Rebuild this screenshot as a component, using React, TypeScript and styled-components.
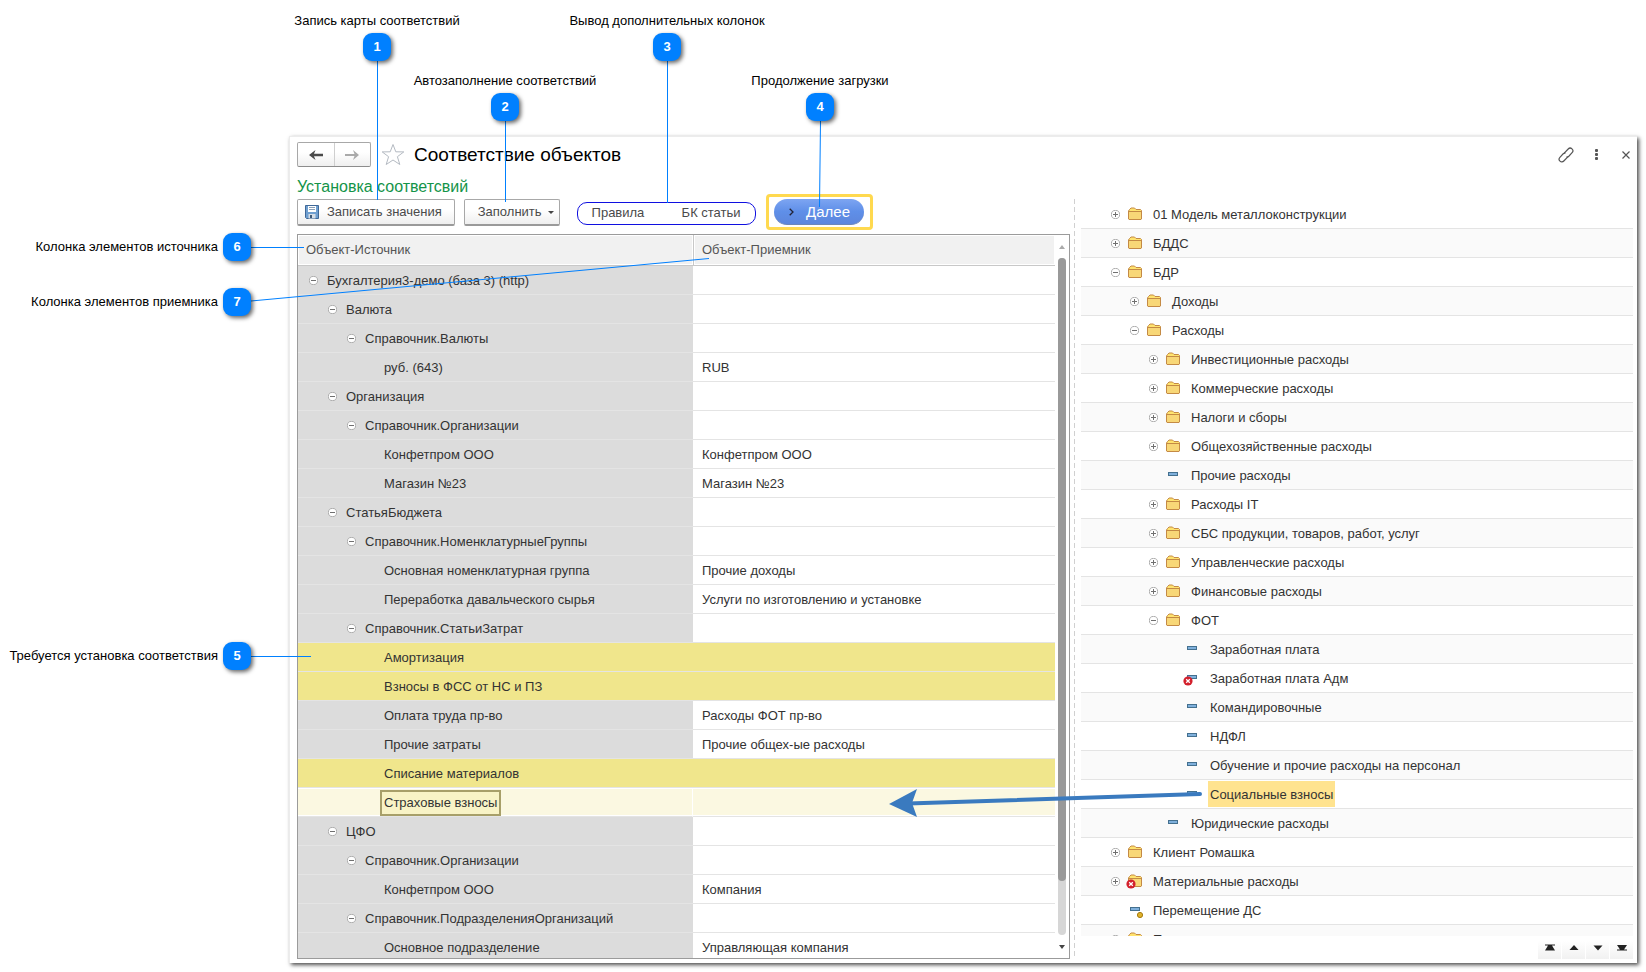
import React from "react";
import styled, { createGlobalStyle, css } from "styled-components";

const GlobalStyle = createGlobalStyle`
  *, *::before, *::after { box-sizing: border-box; }
  body {
    margin: 0;
    background: #fff;
    color: #333;
    font-family: "Liberation Sans", Arial, sans-serif;
    font-size: 13px;
    line-height: 16px;
  }
  button { font: inherit; color: inherit; cursor: pointer; }
`;

/* ---------- page and window ---------- */

const Page = styled.main`
  position: relative;
  display: flex;
  height: 100vh;
  min-height: 600px;
  min-width: 1300px;
  padding: 136px 9px 9px 289px;
  overflow: hidden;
`;

const AppWindow = styled.section`
  display: flex;
  flex: 1;
  flex-direction: column;
  min-width: 0;
  padding: 5px 4px 4px 7px;
  background: #fff;
  border-top: 1px solid #ececec;
  border-left: 1px solid #ececec;
  box-shadow: 2px 2px 4px rgba(0, 0, 0, 0.7);
`;

const TitleBar = styled.header`
  display: flex;
  align-items: center;
  height: 25px;
`;

const History = styled.div`
  display: flex;
  width: 74px;
  height: 25px;
  border: 1px solid #a8a8a8;
  border-bottom-color: #8c8c8c;
  border-radius: 2px;
  background: linear-gradient(#fff 40%, #efefef);
`;

const HistoryButton = styled.button`
  display: flex;
  flex: 1;
  align-items: center;
  justify-content: center;
  padding: 0;
  border: 0;
  background: none;
  color: #4a4a4a;

  & + & {
    border-left: 1px solid #cfcfcf;
    color: #aaa;
  }
`;

const IconButton = styled.button`
  display: flex;
  align-items: center;
  justify-content: center;
  width: 24px;
  height: 24px;
  padding: 0;
  border: 0;
  background: none;
  color: #555;
`;

const StarButton = styled(IconButton)`
  margin: 0 9px 0 10px;
`;

const Title = styled.h1`
  flex: 1;
  margin: 0;
  padding-top: 1px;
  color: #000;
  font-size: 19px;
  font-weight: 400;
  line-height: 24px;
`;

const WindowActions = styled.div`
  display: flex;
  gap: 6px;
  margin-right: -5px;
`;

const Subtitle = styled.h2`
  margin: 13px 0 0;
  color: #149449;
  font-size: 16px;
  font-weight: 400;
  line-height: 14px;
`;

const Panes = styled.div`
  display: flex;
  flex: 1;
  min-height: 0;
`;

const LeftPane = styled.div`
  display: flex;
  flex: 0 0 773px;
  flex-direction: column;
  gap: 4px;
`;

/* ---------- toolbar ---------- */

const Toolbar = styled.div`
  display: flex;
  align-items: center;
  height: 36px;
`;

const ToolButton = styled.button`
  display: flex;
  align-items: center;
  gap: 8px;
  height: 27px;
  margin-right: 9px;
  padding: 1px 12px 0 7px;
  border: 1px solid #a8a8a8;
  border-bottom: 2px solid #9a9a9a;
  border-radius: 2px;
  background: linear-gradient(#fff 40%, #efefef);
  color: #4a4a4a;
`;

const FillButton = styled(ToolButton)`
  gap: 6px;
  padding: 1px 5px 0 13px;
`;

const ColumnSwitch = styled.div`
  display: flex;
  justify-content: space-between;
  width: 179px;
  height: 23px;
  margin: 2px 10px 0 8px;
  padding: 0 14px;
  border: 1px solid #1010e0;
  border-radius: 10px;
`;

const SwitchButton = styled.button`
  padding: 0;
  border: 0;
  background: none;
  color: #4a4a4a;
`;

const NextFrame = styled.div`
  display: flex;
  align-items: center;
  justify-content: center;
  width: 107px;
  height: 36px;
  border: 3px solid #ffd94f;
  border-radius: 4px;
`;

const NextButton = styled.button`
  display: flex;
  align-items: center;
  gap: 12px;
  width: 90px;
  height: 26px;
  padding: 0 0 0 15px;
  border: 0;
  border-bottom: 1px solid #6d86b8;
  border-radius: 13px;
  background: linear-gradient(#7da5f2, #5f8fe8 50%, #5d86dc);
  color: #fff;
  font-size: 15px;
`;

/* ---------- mapping table ---------- */

const TableFrame = styled.div`
  display: flex;
  flex: 1;
  min-height: 0;
  border: 1px solid #9b9b9b;
`;

const TableViewport = styled.div`
  flex: 1;
  overflow: hidden;
`;

const Table = styled.table`
  width: 100%;
  border-collapse: separate;
  border-spacing: 0;
  table-layout: fixed;
`;

const SourceCol = styled.col`
  width: 395px;
`;

const HeadCell = styled.th`
  height: 31px;
  padding: 0 8px;
  border-bottom: 1px solid #c8c8c8;
  background: #f1f1f1;
  box-shadow: inset 0 0 0 1px #fff;
  color: #555;
  font-weight: 400;
  text-align: left;

  & + & { border-left: 1px solid #c8c8c8; }
`;

type Tone = "plain" | "missing" | "selected";

const Cell = styled.td`
  height: 29px;
  padding: 1px 9px 0;
  border-bottom: 1px solid #e4e4e4;
`;

const Row = styled.tr<{ $tone: Tone }>`
  ${Cell}:first-child { background: #dcdcdc; }

  ${(p) =>
    p.$tone === "missing" &&
    css`
      ${Cell}, ${Cell}:first-child { background: #f0e68c; }
    `}

  ${(p) =>
    p.$tone === "selected" &&
    css`
      ${Cell}, ${Cell}:first-child {
        background: #fbf8e1;
        box-shadow: inset 0 1px #fff, inset 0 -1px #fff;
      }
      ${Cell}:first-child { border-right: 1px solid #fff; }
    `}
`;

const SourceItem = styled.div<{ $level: number }>`
  display: flex;
  align-items: center;
  gap: 9px;
  padding-left: ${(p) => 2 + p.$level * 19}px;
`;

const LeafName = styled.span<{ $selected: boolean }>`
  margin-left: 18px;

  ${(p) =>
    p.$selected &&
    css`
      height: 26px;
      margin: 0 0 0 14px;
      padding: 3px 2px;
      border: 2px solid #a79f69;
      background: #f8f3c6;
    `}
`;

const ToggleButton = styled.button`
  display: flex;
  flex: none;
  width: 9px;
  height: 9px;
  padding: 0;
  border: 0;
  background: none;
`;

const Scrollbar = styled.div`
  display: flex;
  flex: 0 0 14px;
  flex-direction: column;
  align-items: center;
`;

const ScrollArrow = styled.button`
  display: flex;
  align-items: center;
  justify-content: center;
  width: 14px;
  height: 23px;
  padding: 0;
  border: 0;
  background: none;
`;

const ScrollTrack = styled.div`
  flex: 1;
  width: 8px;
  border-radius: 4px;
  background: #d6d6d6;
`;

const ScrollThumb = styled.div`
  height: 92%;
  border-radius: 4px;
  background: #999;
`;

/* ---------- article tree ---------- */

const Splitter = styled.div`
  flex: none;
  width: 1px;
  margin: 5px 6px 0 4px;
  background: repeating-linear-gradient(#d0d0d0 0 5px, transparent 5px 8px);
`;

const RightPane = styled.div`
  display: flex;
  flex: 1;
  flex-direction: column;
  min-width: 0;
  padding-top: 6px;
`;

const Tree = styled.ul`
  flex: 1;
  min-height: 0;
  margin: 0;
  padding: 0;
  overflow: hidden;
  list-style: none;
`;

const TreeRow = styled.li<{ $level: number }>`
  display: flex;
  align-items: center;
  height: 29px;
  padding-left: ${(p) => 30 + p.$level * 19}px;
  border-bottom: 1px solid #e4e4e4;

  &:nth-child(even) { background: #fafafa; }
`;

const ToggleSlot = styled.span`
  display: flex;
  width: 16px;
`;

const TreeName = styled.span<{ $marked: boolean }>`
  margin-left: 8px;
  padding: 6px 2px 4px;
  background: ${(p) => (p.$marked ? "#ffe38f" : "none")};
`;

const Pager = styled.div`
  display: flex;
  flex: none;
  gap: 1px;
  justify-content: flex-end;
  padding-top: 5px;
`;

const PagerButton = styled.button`
  display: flex;
  align-items: center;
  justify-content: center;
  width: 23px;
  height: 18px;
  padding: 0 0 6px;
  border: 0;
  background: linear-gradient(#fff, #f1f1f1);
`;

/* ---------- callouts ---------- */

const Overlay = styled.svg`
  position: absolute;
  top: 0;
  left: 0;
  width: 100%;
  height: 100%;
  pointer-events: none;
`;

const TopCallout = styled.div<{ $x: number; $y: number }>`
  position: absolute;
  top: ${(p) => p.$y}px;
  left: ${(p) => p.$x}px;
  display: flex;
  flex-direction: column;
  align-items: center;
  gap: 4px;
  width: 240px;
  color: #000;
`;

const SideCallout = styled.div<{ $y: number }>`
  position: absolute;
  top: ${(p) => p.$y}px;
  left: 0;
  display: flex;
  align-items: center;
  justify-content: flex-end;
  gap: 5px;
  width: 251px;
  color: #000;
`;

const Badge = styled.span`
  width: 28px;
  height: 28px;
  border-radius: 9px;
  background: #0080ff;
  box-shadow: 2px 2px 4px rgba(0, 0, 0, 0.6);
  color: #fff;
  font-weight: 700;
  line-height: 28px;
  text-align: center;
`;

/* ---------- icons ---------- */

const Toggle = ({ open }: { open: boolean }) => (
  <ToggleButton type="button" aria-expanded={open} aria-label={open ? "Свернуть" : "Развернуть"}>
    <svg width="9" height="9" viewBox="0 0 9 9" fill="none">
      <circle cx="4.5" cy="4.5" r="4.1" fill="#fff" stroke="#adadad" />
      <path d={open ? "M2 4.5h5" : "M2 4.5h5M4.5 2v5"} stroke="#707070" />
    </svg>
  </ToggleButton>
);

const Deleted = ({ x, y }: { x: number; y: number }) => (
  <g transform={`translate(${x} ${y})`}>
    <circle r="4.6" fill="#d3202c" />
    <path d="M-1.8-1.8l3.6 3.6M1.8-1.8l-3.6 3.6" stroke="#fff" strokeWidth="1.3" />
  </g>
);

type IconKind = "folder" | "item" | "folderDeleted" | "itemDeleted" | "itemCoin";

const TreeIcon = ({ kind }: { kind: IconKind }) => (
  <svg width="16" height="16" viewBox="0 0 16 16" overflow="visible" aria-hidden="true">
    {kind.startsWith("folder") ? (
      <>
        <path d="M1.5 13V5l1-1.500 1.500-1.500h3.500l1.500 1.500h4.500l1 1V13l-.5.5h-12z" fill="#ffe36e" stroke="#c48a45" />
        <path d="M2 6h12v7H2z" fill="#f8d777" />
        <path d="M2 5.500h12.500" stroke="#c48a45" />
      </>
    ) : (
      <rect x="3.500" y="5.500" width="9" height="3" fill="#7fb0dc" stroke="#44708f" />
    )}
    {kind === "folderDeleted" && <Deleted x={4} y={11} />}
    {kind === "itemDeleted" && <Deleted x={4} y={11} />}
    {kind === "itemCoin" && <circle cx="13" cy="13" r="2.600" fill="#e0b22a" stroke="#a67c10" />}
  </svg>
);

const Floppy = () => (
  <svg width="14" height="14" viewBox="0 0 14 14" aria-hidden="true">
    <path d="M.5.5h13v13h-12l-1-1z" fill="#6f9fd0" stroke="#3f6898" />
    <path d="M3 1h8v6H3z" fill="#fff" />
    <path d="M4 2.500h6M4 4.500h6" stroke="#8aa0b8" />
    <path d="M3.500 9h7v4.500h-7z" fill="#d5dde6" />
    <path d="M5 10h2v3H5z" fill="#3f5a78" />
  </svg>
);

const PAGER: { label: string; d: string }[] = [
  { label: "В начало", d: "M0 1.500V.5h10v1H7l3 5H0l3-5z" },
  { label: "Вверх", d: "M5 1l4.500 5h-9z" },
  { label: "Вниз", d: "M5 6.500L9.500 1.500h-9z" },
  { label: "В конец", d: "M10 5.500v1H0v-1h3l-3-4.500h10l-3 4.500z" },
];

/* ---------- data ---------- */

interface MappingRow {
  level: number;
  name: string;
  target?: string;
  tone?: Tone;
}

const MAPPING: MappingRow[] = [
  { level: 0, name: "Бухгалтерия3-демо (база 3) (http)" },
  { level: 1, name: "Валюта" },
  { level: 2, name: "Справочник.Валюты" },
  { level: 3, name: "руб. (643)", target: "RUB" },
  { level: 1, name: "Организация" },
  { level: 2, name: "Справочник.Организации" },
  { level: 3, name: "Конфетпром ООО", target: "Конфетпром ООО" },
  { level: 3, name: "Магазин №23", target: "Магазин №23" },
  { level: 1, name: "СтатьяБюджета" },
  { level: 2, name: "Справочник.НоменклатурныеГруппы" },
  { level: 3, name: "Основная номенклатурная группа", target: "Прочие доходы" },
  { level: 3, name: "Переработка давальческого сырья", target: "Услуги по изготовлению и установке" },
  { level: 2, name: "Справочник.СтатьиЗатрат" },
  { level: 3, name: "Амортизация", tone: "missing" },
  { level: 3, name: "Взносы в ФСС от НС и ПЗ", tone: "missing" },
  { level: 3, name: "Оплата труда пр-во", target: "Расходы ФОТ пр-во" },
  { level: 3, name: "Прочие затраты", target: "Прочие общех-ые расходы" },
  { level: 3, name: "Списание материалов", tone: "missing" },
  { level: 3, name: "Страховые взносы", tone: "selected" },
  { level: 1, name: "ЦФО" },
  { level: 2, name: "Справочник.Организации" },
  { level: 3, name: "Конфетпром ООО", target: "Компания" },
  { level: 2, name: "Справочник.ПодразделенияОрганизаций" },
  { level: 3, name: "Основное подразделение", target: "Управляющая компания" },
];

interface Article {
  level: number;
  name: string;
  icon: IconKind;
  open?: boolean;
  marked?: boolean;
}

const ARTICLES: Article[] = [
  { level: 0, name: "01 Модель металлоконструкции", icon: "folder" },
  { level: 0, name: "БДДС", icon: "folder" },
  { level: 0, name: "БДР", icon: "folder", open: true },
  { level: 1, name: "Доходы", icon: "folder" },
  { level: 1, name: "Расходы", icon: "folder", open: true },
  { level: 2, name: "Инвестиционные расходы", icon: "folder" },
  { level: 2, name: "Коммерческие расходы", icon: "folder" },
  { level: 2, name: "Налоги и сборы", icon: "folder" },
  { level: 2, name: "Общехозяйственные расходы", icon: "folder" },
  { level: 2, name: "Прочие расходы", icon: "item" },
  { level: 2, name: "Расходы IT", icon: "folder" },
  { level: 2, name: "СБС продукции, товаров, работ, услуг", icon: "folder" },
  { level: 2, name: "Управленческие расходы", icon: "folder" },
  { level: 2, name: "Финансовые расходы", icon: "folder" },
  { level: 2, name: "ФОТ", icon: "folder", open: true },
  { level: 3, name: "Заработная плата", icon: "item" },
  { level: 3, name: "Заработная плата Адм", icon: "itemDeleted" },
  { level: 3, name: "Командировочные", icon: "item" },
  { level: 3, name: "НДФЛ", icon: "item" },
  { level: 3, name: "Обучение и прочие расходы на персонал", icon: "item" },
  { level: 3, name: "Социальные взносы", icon: "item", marked: true },
  { level: 2, name: "Юридические расходы", icon: "item" },
  { level: 0, name: "Клиент Ромашка", icon: "folder" },
  { level: 0, name: "Материальные расходы", icon: "folderDeleted" },
  { level: 0, name: "Перемещение ДС", icon: "itemCoin" },
  { level: 0, name: "П", icon: "folder" },
];

const TOP_CALLOUTS = [
  { n: 1, x: 257, y: 13, text: "Запись карты соответствий" },
  { n: 2, x: 385, y: 73, text: "Автозаполнение соответствий" },
  { n: 3, x: 547, y: 13, text: "Вывод дополнительных колонок" },
  { n: 4, x: 700, y: 73, text: "Продолжение загрузки" },
];

const SIDE_CALLOUTS = [
  { n: 6, y: 233, text: "Колонка элементов источника" },
  { n: 7, y: 288, text: "Колонка элементов приемника" },
  { n: 5, y: 642, text: "Требуется установка соответствия" },
];

/* ---------- parts ---------- */

const MappingTable = () => (
  <TableFrame>
    <TableViewport>
      <Table>
        <colgroup>
          <SourceCol />
          <col />
        </colgroup>
        <thead>
          <tr>
            <HeadCell scope="col">Объект-Источник</HeadCell>
            <HeadCell scope="col">Объект-Приемник</HeadCell>
          </tr>
        </thead>
        <tbody>
          {MAPPING.map((row, i) => (
            <Row key={i} $tone={row.tone ?? "plain"}>
              <Cell>
                <SourceItem $level={row.level}>
                  {row.level < 3 ? (
                    <>
                      <Toggle open />
                      <span>{row.name}</span>
                    </>
                  ) : (
                    <LeafName $selected={row.tone === "selected"}>{row.name}</LeafName>
                  )}
                </SourceItem>
              </Cell>
              <Cell>{row.target}</Cell>
            </Row>
          ))}
        </tbody>
      </Table>
    </TableViewport>
    <Scrollbar>
      <ScrollArrow type="button" aria-label="Прокрутить вверх">
        <svg width="6" height="4" viewBox="0 0 6 4"><path d="M3 0l3 4H0z" fill="#aaa" /></svg>
      </ScrollArrow>
      <ScrollTrack>
        <ScrollThumb />
      </ScrollTrack>
      <ScrollArrow type="button" aria-label="Прокрутить вниз">
        <svg width="6" height="4" viewBox="0 0 6 4"><path d="M3 4l3-4H0z" fill="#444" /></svg>
      </ScrollArrow>
    </Scrollbar>
  </TableFrame>
);

const ArticleTree = () => (
  <Tree>
    {ARTICLES.map((a) => (
      <TreeRow key={a.name} $level={a.level}>
        <ToggleSlot>{a.icon.startsWith("folder") && <Toggle open={!!a.open} />}</ToggleSlot>
        <TreeIcon kind={a.icon} />
        <TreeName $marked={!!a.marked}>{a.name}</TreeName>
      </TreeRow>
    ))}
  </Tree>
);

export default function App() {
  return (
    <Page>
      <GlobalStyle />
      <AppWindow>
        <TitleBar>
          <History>
            <HistoryButton type="button" aria-label="Назад">
              <svg width="14" height="10" viewBox="0 0 14 10" fill="currentColor">
                <path d="M14 3.800v2.400H5L6.500 10 0 5l6.500-5L5 3.800z" />
              </svg>
            </HistoryButton>
            <HistoryButton type="button" aria-label="Вперед">
              <svg width="14" height="10" viewBox="0 0 14 10" fill="currentColor">
                <path d="M0 4v2h9.500L8 10l6-5-6-5 1.500 4z" />
              </svg>
            </HistoryButton>
          </History>
          <StarButton type="button" aria-label="В избранное">
            <svg width="24" height="23" viewBox="0 0 24 23" fill="none" stroke="#b4bac2">
              <path d="M12 1.500l2.800 7.300 8 .1-6.400 4.800 2.400 7.800L12 17l-6.800 4.500 2.400-7.800L1.200 8.900l8-.1z" />
            </svg>
          </StarButton>
          <Title>Соответствие объектов</Title>
          <WindowActions>
            <IconButton type="button" aria-label="Ссылка">
              <svg width="16" height="16" viewBox="0 0 16 16" fill="none" stroke="currentColor" strokeWidth="1.200">
                <path d="M6.200 6.200l4-4.200a2.600 2.600 0 0 1 3.900 3.700L10.800 9.200a2.500 2.500 0 0 1-2.300.6" />
                <path d="M9.800 9.800l-4 4.200a2.600 2.600 0 0 1-3.900-3.700L5.200 6.800a2.500 2.500 0 0 1 2.300-.6" />
              </svg>
            </IconButton>
            <IconButton type="button" aria-label="Еще">
              <svg width="3" height="12" viewBox="0 0 3 12" fill="currentColor">
                <rect width="3" height="3" rx="1" />
                <rect y="4" width="3" height="3" rx="1" />
                <rect y="8" width="3" height="3" rx="1" />
              </svg>
            </IconButton>
            <IconButton type="button" aria-label="Закрыть">
              <svg width="8" height="8" viewBox="0 0 8 8" stroke="currentColor" strokeWidth="1.200">
                <path d="M.5.5l7 7M7.500.5l-7 7" />
              </svg>
            </IconButton>
          </WindowActions>
        </TitleBar>
        <Subtitle>Установка соответсвий</Subtitle>
        <Panes>
          <LeftPane>
            <Toolbar>
              <ToolButton type="button">
                <Floppy />
                Записать значения
              </ToolButton>
              <FillButton type="button">
                Заполнить
                <svg width="6" height="3" viewBox="0 0 6 3" aria-hidden="true"><path d="M0 0h6L3 3z" fill="#444" /></svg>
              </FillButton>
              <ColumnSwitch>
                <SwitchButton type="button">Правила</SwitchButton>
                <SwitchButton type="button">БК статьи</SwitchButton>
              </ColumnSwitch>
              <NextFrame>
                <NextButton type="button">
                  <svg width="5" height="8" viewBox="0 0 5 8" fill="none" stroke="#223" strokeWidth="1.300" aria-hidden="true">
                    <path d="M.7.8L4 4 .7 7.200" />
                  </svg>
                  Далее
                </NextButton>
              </NextFrame>
            </Toolbar>
            <MappingTable />
          </LeftPane>
          <Splitter />
          <RightPane>
            <ArticleTree />
            <Pager>
              {PAGER.map((p) => (
                <PagerButton key={p.label} type="button" aria-label={p.label}>
                  <svg width="10" height="7" viewBox="0 0 10 7" fill="#222"><path d={p.d} /></svg>
                </PagerButton>
              ))}
            </Pager>
          </RightPane>
        </Panes>
      </AppWindow>

      <Overlay aria-hidden="true">
        <g stroke="#0080ff" fill="none">
          <path d="M377.500 61v139M505.500 121v81M667.500 61v142M820.500 121l-1 86" />
          <path d="M251 247.500h53M251 656.500h60M251 301L709 258.500" />
        </g>
        <path d="M1200 794L908 803.500" stroke="#3a7abf" strokeWidth="4" strokeLinecap="round" />
        <path d="M889 804l28-15-5 14 5 14z" fill="#3a7abf" />
      </Overlay>

      {TOP_CALLOUTS.map((c) => (
        <TopCallout key={c.n} $x={c.x} $y={c.y}>
          <span>{c.text}</span>
          <Badge>{c.n}</Badge>
        </TopCallout>
      ))}
      {SIDE_CALLOUTS.map((c) => (
        <SideCallout key={c.n} $y={c.y}>
          <span>{c.text}</span>
          <Badge>{c.n}</Badge>
        </SideCallout>
      ))}
    </Page>
  );
}
